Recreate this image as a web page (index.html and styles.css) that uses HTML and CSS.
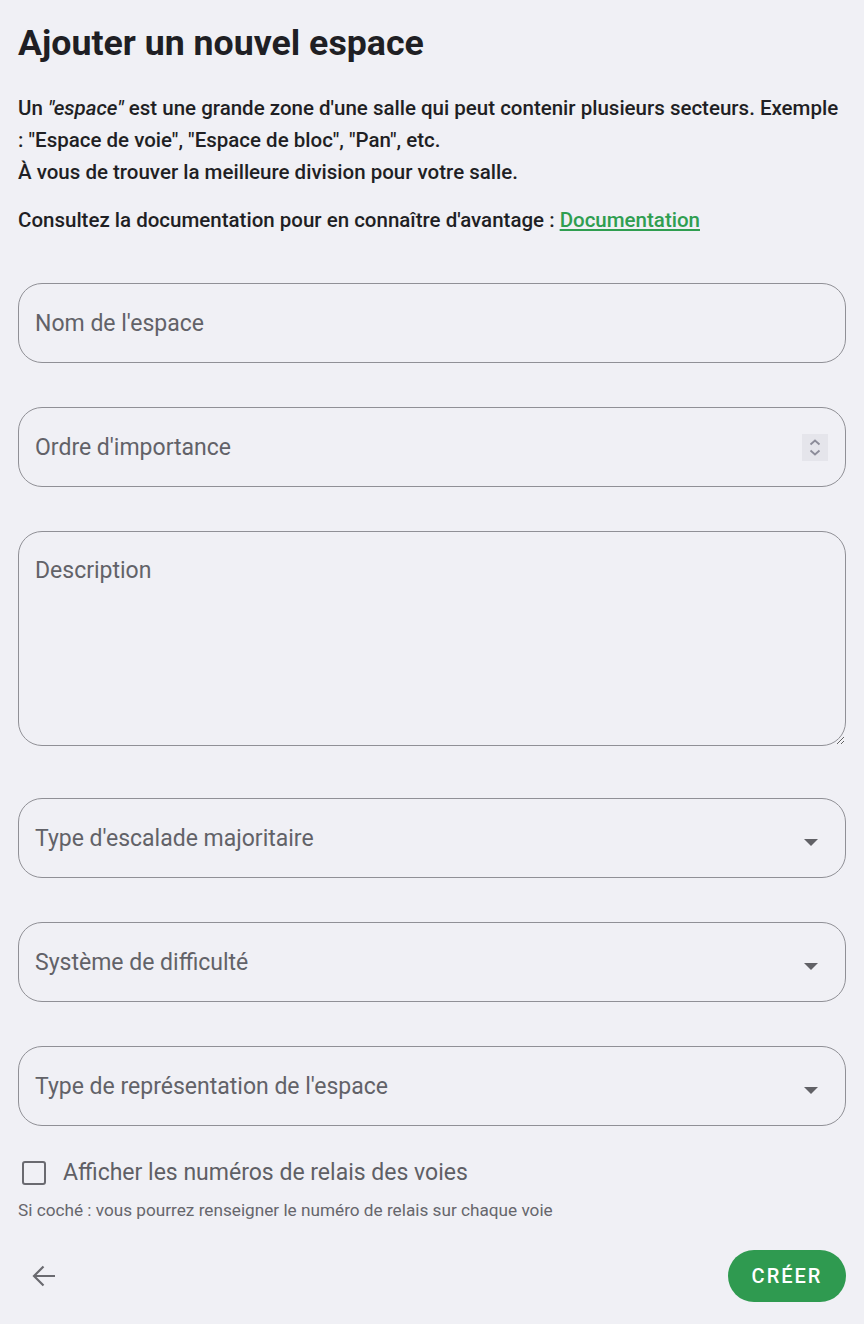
FILE: index.html
```html
<!DOCTYPE html>
<html lang="fr">
<head>
<meta charset="utf-8">
<title>Ajouter un nouvel espace</title>
<link rel="stylesheet" href="styles.css">
</head>
<body>
<main class="page">
  <h1 class="title">Ajouter un nouvel espace</h1>
  <p class="intro">Un <em>"espace"</em> est une grande zone d'une salle qui peut contenir plusieurs secteurs. Exemple : "Espace de voie", "Espace de bloc", "Pan", etc.<br>À vous de trouver la meilleure division pour votre salle.</p>
  <p class="doc">Consultez la documentation pour en connaître d'avantage : <a href="#" class="link">Documentation</a></p>

  <form class="form">
    <div class="field"><input class="input" type="text" placeholder="Nom de l'espace"></div>
    <div class="field">
      <input class="input" type="text" placeholder="Ordre d'importance">
      <span class="spinner">
        <svg width="26" height="27" viewBox="0 0 26 27"><rect width="26" height="27" fill="#e5e5eb"/><path d="M8.5 10.5 L13 6.5 L17.5 10.5" fill="none" stroke="#8c8c99" stroke-width="1.8"/><path d="M8.5 16.5 L13 20.5 L17.5 16.5" fill="none" stroke="#8c8c99" stroke-width="1.8"/></svg>
      </span>
    </div>
    <textarea class="area" placeholder="Description"></textarea>
    <div class="field select"><span class="ph">Type d'escalade majoritaire</span><span class="caret"></span></div>
    <div class="field select"><span class="ph">Système de difficulté</span><span class="caret"></span></div>
    <div class="field select"><span class="ph">Type de représentation de l'espace</span><span class="caret"></span></div>
  </form>

  <label class="check"><span class="box"></span><span class="check-label">Afficher les numéros de relais des voies</span></label>
  <p class="hint">Si coché : vous pourrez renseigner le numéro de relais sur chaque voie</p>

  <div class="actions">
    <button class="back" type="button" aria-label="Retour">
      <svg width="24" height="22" viewBox="0 0 24 22"><path d="M23 11 H2 M11.5 1.5 L2 11 L11.5 20.5" fill="none" stroke="#6a6a70" stroke-width="2.2"/></svg>
    </button>
    <button class="create" type="button">CRÉER</button>
  </div>
</main>
</body>
</html>
```

FILE: styles.css
```css
html, body {
  margin: 0;
  padding: 0;
  background: #f0f0f5;
}
body {
  font-family: Roboto, "Noto Sans", sans-serif;
  color: #1f1f24;
}
.page {
  padding: 22px 18px 0;
}
.title {
  margin: 0;
  font-size: 35.7px;
  font-weight: 700;
  line-height: 42px;
  color: #1f1f24;
}
.intro {
  margin: 28px 0 0;
  font-size: 20.5px;
  font-weight: 500;
  line-height: 32px;
}
.intro em {
  font-style: italic;
}
.doc {
  margin: 16px 0 0;
  font-size: 20.5px;
  font-weight: 500;
  line-height: 32px;
}
.link {
  color: #2f9e50;
  text-decoration: underline;
}
.form {
  margin-top: 47px;
  display: flex;
  flex-direction: column;
  gap: 44px;
}
.field {
  height: 80px;
  box-sizing: border-box;
  border: 1px solid #909096;
  border-radius: 24px;
  display: flex;
  align-items: center;
  padding: 0 17px 0 16px;
}
.input {
  flex: 1;
  border: 0;
  background: transparent;
  outline: none;
  font-family: Roboto, sans-serif;
  font-size: 23px;
  color: #1f1f24;
  padding: 0;
}
.input::placeholder, .area::placeholder {
  color: #626268;
  opacity: 1;
}
.spinner {
  display: flex;
}
.area {
  height: 215px;
  box-sizing: border-box;
  border: 1px solid #909096;
  border-radius: 24px;
  background: transparent;
  padding: 25px 16px;
  font-family: Roboto, sans-serif;
  font-size: 23px;
  color: #1f1f24;
  resize: vertical;
  margin-bottom: 8px;
  outline: none;
}
.select {
  justify-content: space-between;
  padding-right: 27px;
}
.ph {
  font-size: 23px;
  color: #626268;
}
.caret {
  width: 0;
  height: 0;
  border-left: 7px solid transparent;
  border-right: 7px solid transparent;
  border-top: 7px solid #616166;
  margin-top: 8px;
}
.check {
  display: flex;
  align-items: center;
  gap: 17px;
  margin-top: 34px;
  padding-left: 4px;
}
.box {
  width: 20px;
  height: 20px;
  border: 2.5px solid #6a6a70;
  border-radius: 3px;
}
.check-label {
  font-size: 23px;
  line-height: 25px;
  color: #5f5f65;
}
.hint {
  margin: 14px 0 0;
  font-size: 17.2px;
  line-height: 22px;
  color: #66666c;
}
.actions {
  margin-top: 29px;
  display: flex;
  justify-content: space-between;
  align-items: center;
}
.back {
  border: 0;
  background: transparent;
  padding: 0;
  margin-left: 14px;
  display: flex;
  cursor: pointer;
}
.create {
  width: 118px;
  height: 52px;
  border: 0;
  border-radius: 26px;
  background: #2f9a50;
  color: #ffffff;
  font-family: Roboto, sans-serif;
  font-size: 20px;
  font-weight: 500;
  letter-spacing: 2px;
  cursor: pointer;
}
```
